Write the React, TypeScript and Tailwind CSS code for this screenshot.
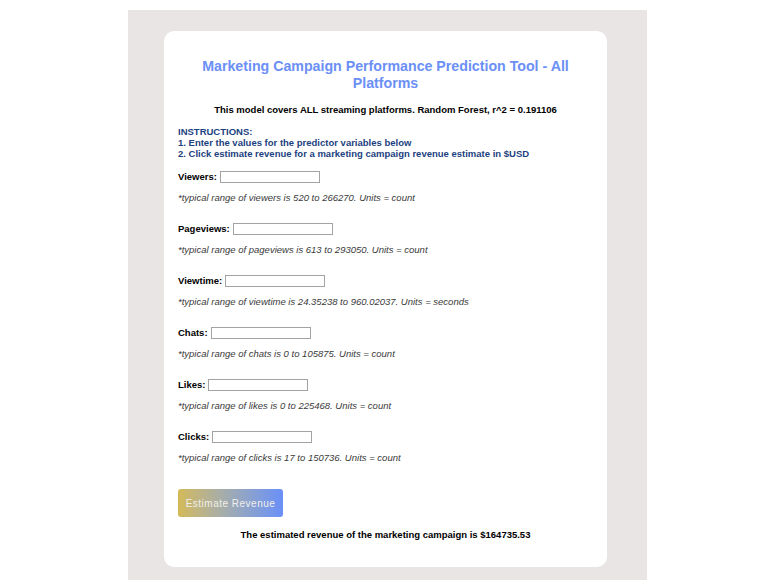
import React from "react";

const fields = [
  { label: "Viewers:", hint: "*typical range of viewers is 520 to 266270. Units = count" },
  { label: "Pageviews:", hint: "*typical range of pageviews is 613 to 293050. Units = count" },
  { label: "Viewtime:", hint: "*typical range of viewtime is 24.35238 to 960.02037. Units = seconds" },
  { label: "Chats:", hint: "*typical range of chats is 0 to 105875. Units = count" },
  { label: "Likes:", hint: "*typical range of likes is 0 to 225468. Units = count" },
  { label: "Clicks:", hint: "*typical range of clicks is 17 to 150736. Units = count" },
];

export default function App() {
  return (
    <div className="min-h-[580px] bg-white flex justify-center" style={{ fontFamily: '"Liberation Sans", Arial, sans-serif' }}>
      <div className="w-[519px] mt-[10px] bg-[#e9e5e4] pt-[21px] pl-[36px] pb-[14px]">
        <div className="w-[443px] bg-white rounded-[10px] pt-[27px] pb-[25px] px-[14px]">
          <h1 className="text-center text-[14.2px] leading-[17px] font-bold text-[#6b8ff5]">
            Marketing Campaign Performance Prediction Tool - All Platforms
          </h1>
          <p className="text-center text-[9.5px] font-bold text-black mt-[12px] leading-[12px]">
            This model covers ALL streaming platforms. Random Forest, r^2 = 0.191106
          </p>
          <div className="mt-[10px] text-[9.5px] leading-[11px] font-bold text-[#1c3f80]">
            <div>INSTRUCTIONS:</div>
            <div>1. Enter the values for the predictor variables below</div>
            <div>2. Click estimate revenue for a marketing campaign revenue estimate in $USD</div>
          </div>
          <div className="mt-[11px] flex flex-col">
            {fields.map((f) => (
              <div key={f.label} className="h-[52px]">
                <div className="flex items-center gap-[3px] h-[14px]">
                  <span className="text-[9.5px] font-bold text-black">{f.label}</span>
                  <div className="w-[100px] h-[12px] border border-[#a3a3a3] bg-white" />
                </div>
                <div className="mt-[8px] text-[9.5px] italic text-[#3a3a3a] leading-[12px]">{f.hint}</div>
              </div>
            ))}
          </div>
          <div className="mt-[7px]">
            <button className="w-[105px] h-[28px] rounded-[3px] bg-gradient-to-r from-[#d4b955] to-[#6a8ff8] text-[10px] text-[#f1efea] tracking-[0.5px]">
              Estimate Revenue
            </button>
          </div>
          <p className="text-center mt-[11px] text-[9.5px] font-bold text-black">
            The estimated revenue of the marketing campaign is $164735.53
          </p>
        </div>
      </div>
    </div>
  );
}
